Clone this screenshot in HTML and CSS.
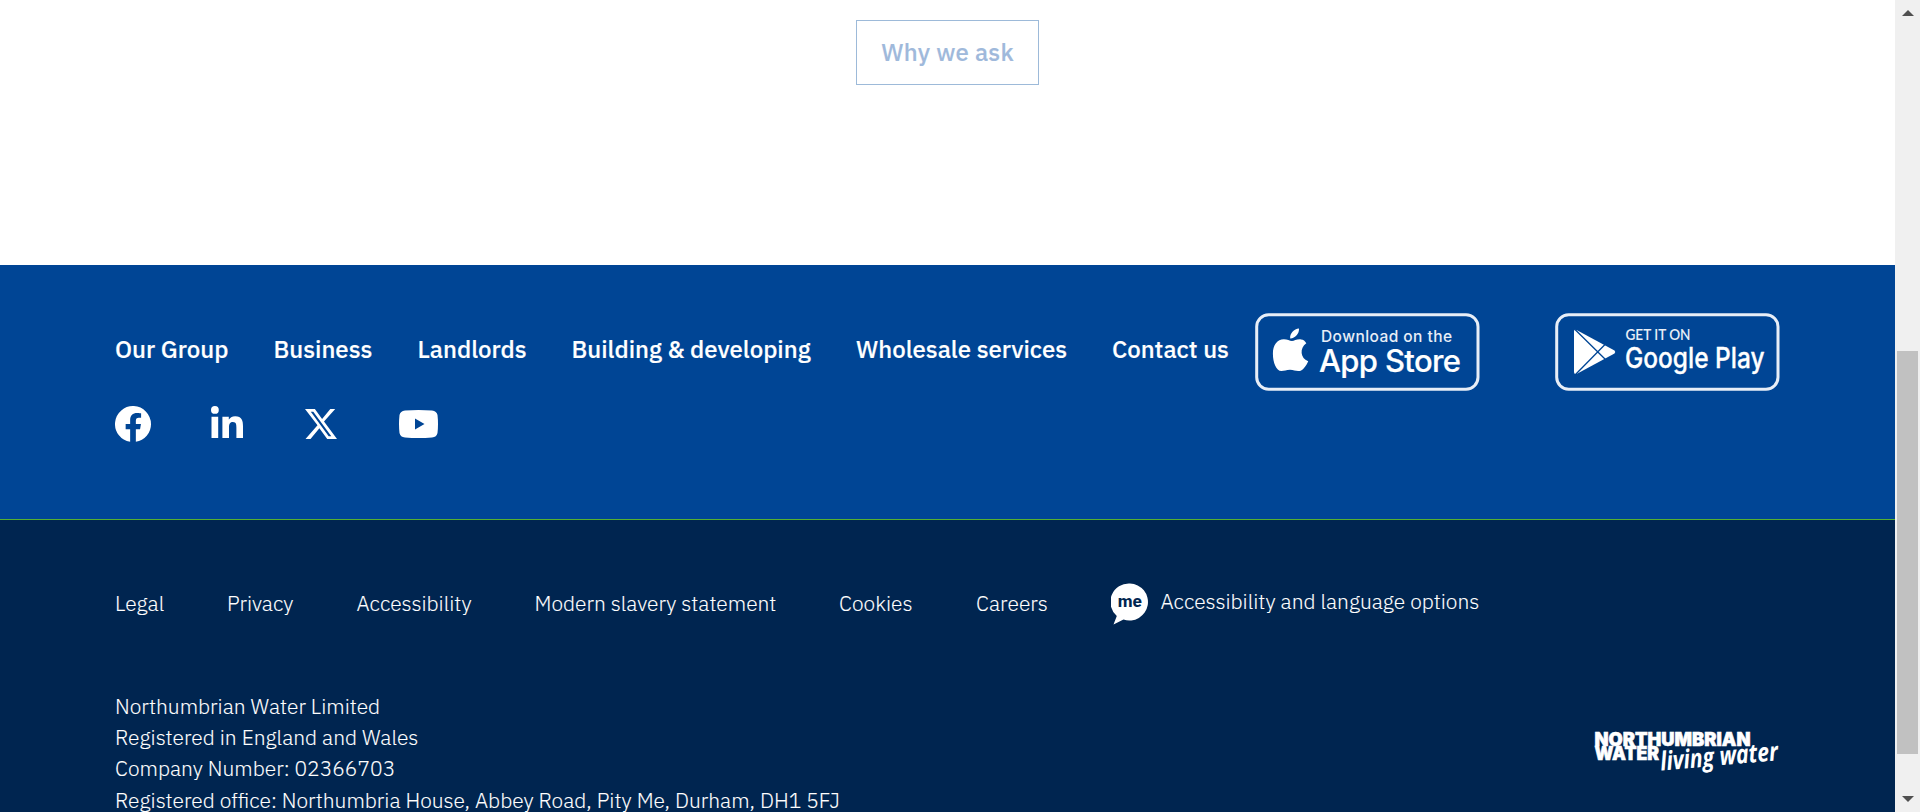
FILE: index.html
```html
<!DOCTYPE html>
<html lang="en">
<head>
<meta charset="utf-8">
<title>Northumbrian Water</title>
<link rel="stylesheet" href="styles.css">
</head>
<body>
<div class="window">
  <div class="page">
    <main class="content">
      <a class="button">Why we ask</a>
    </main>
    <footer>
      <section class="primary">
        <div class="primary-links">
          <nav class="nav">
            <a>Our Group</a><a>Business</a><a>Landlords</a><a>Building &amp; developing</a><a>Wholesale services</a><a>Contact us</a>
          </nav>
          <div class="social">
            <svg class="fb" viewBox="0 0 24 24"><path d="M24 12a12 12 0 1 0-13.9 11.9v-8.4H7.1V12h3V9.4c0-3 1.8-4.7 4.6-4.7 1.3 0 2.7.2 2.7.2v3h-1.5c-1.5 0-2 .9-2 1.900V12h3.400l-.6 3.500h-2.800v8.400A12 12 0 0 0 24 12z"/></svg>
            <svg class="in" viewBox="0 0 32 32"><circle cx="3.900" cy="3.900" r="3.900"/><path d="M.5 10.700h6.700V32H.5zM11.400 10.700h6.400v2.900h.1c.9-1.700 3.100-3.400 6.300-3.400 6.700 0 7.800 4.400 7.800 10.100V32h-6.600V21.700c0-2.500 0-5.600-3.500-5.600-3.400 0-3.900 2.600-3.900 5.400V32h-6.600z"/></svg>
            <svg class="x" viewBox="0 0 32 30"><path fill-rule="evenodd" d="M0 0h9.900l7.200 9.900L25.300 0h4.900L19 12.500 32 30h-9.800l-7.800-10.700L5.500 30H.5l12-13.700zM5.800 2.800l17.900 24.400h2.600L8.300 2.800z"/></svg>
            <svg class="yt" viewBox="0 0 39 28"><path fill-rule="evenodd" d="M6 .5Q19.500-.5 33 .5Q37.700 1 38.500 5Q39.500 14 38.500 23Q37.700 27 33 27.500Q19.500 28.500 6 27.500Q1.300 27 .5 23Q-.5 14 .5 5Q1.300 1 6 .5zM16 8.500v11l9.500-5.500z"/></svg>
          </div>
        </div>
        <div class="stores">
          <svg class="badge" viewBox="0 0 225 78">
            <rect class="frame" x="1.700" y="1.700" width="221.300" height="74.600" rx="12"/>
            <path d="M44 15.500c.4 5-3.800 10-8.800 9.900-.5-4.800 3.800-9.700 8.800-9.900zM51.300 30.200c-7 4.800-6 15.200 1.900 18-2 4.500-5.300 9.800-9.700 9.900-3.200.1-4.600-1.300-8.500-1.300s-5.500 1.300-8.600 1.300c-5.300 0-8.500-9-8.500-17.400-.1-8.700 4.500-14.400 10.900-14.400 3.500 0 5.900 1.700 8.200 1.700 2.200 0 4.700-2 9-1.600 2.500.2 3.900 1.300 5.300 3.800z"/>
            <text class="get" x="66" y="28.500" textLength="131">Download on the</text>
            <text class="store" x="64" y="58.500" textLength="142">App Store</text>
          </svg>
          <svg class="badge" viewBox="0 0 225 78">
            <rect class="frame" x="1.700" y="1.700" width="221.300" height="74.600" rx="12"/>
            <path d="M19 18Q19.300 16 22 17.200L59.500 37.500Q61 39 59.500 40.400L22 60.700Q19 62 19 59z"/>
            <path class="cut" d="M20 16.500L51.500 47.500M20.500 61.500L50 31.500"/>
            <text class="get-google" x="70.500" y="27" textLength="65" lengthAdjust="spacingAndGlyphs">GET IT ON</text>
            <text class="google" x="70" y="54.500" textLength="139.500" lengthAdjust="spacingAndGlyphs">Google Play</text>
          </svg>
        </div>
      </section>
      <section class="secondary">
        <nav class="legal">
          <a>Legal</a><a>Privacy</a><a>Accessibility</a><a>Modern slavery statement</a><a>Cookies</a><a>Careers</a>
          <a class="options">
            <svg class="me" viewBox="0 0 38 42"><path d="M19 .5a18.500 18.500 0 1 1-6.500 36L2.500 41.500 5.800 33A18.500 18.500 0 0 1 19 .5z"/><text x="6.500" y="24" textLength="24.500">me</text></svg>
            <span class="options-label">Accessibility and language options</span>
          </a>
        </nav>
        <div class="company">
          <div class="address">
            <div>Northumbrian Water Limited</div>
            <div>Registered in England and Wales</div>
            <div>Company Number: 02366703</div>
            <div>Registered office: Northumbria House, Abbey Road, Pity Me, Durham, DH1 5FJ</div>
          </div>
          <svg class="logo" viewBox="0 0 186 48">
            <text class="brand" x="0.500" y="15.500" textLength="156" lengthAdjust="spacingAndGlyphs">NORTHUMBRIAN</text>
            <text class="brand" x="0.500" y="30" textLength="64.500" lengthAdjust="spacingAndGlyphs">WATER</text>
            <text class="script" transform="translate(67 40.500) rotate(-5)" x="0" y="0" textLength="118" lengthAdjust="spacingAndGlyphs">living water</text>
          </svg>
        </div>
      </section>
    </footer>
  </div>
  <div class="scrollbar">
    <svg class="arrow" viewBox="0 0 12 6"><path d="M6 0l6 6H0z"/></svg>
    <div class="thumb"></div>
    <svg class="arrow down" viewBox="0 0 12 6"><path d="M0 0h12L6 6z"/></svg>
  </div>
</div>
</body>
</html>
```
FILE: styles.css
```css
* { box-sizing: border-box; }
body { margin: 0; overflow: hidden; background: #fff; font-family: "IBM Plex Sans", "Noto Sans", sans-serif; }
.window { display: flex; width: 1920px; height: 812px; overflow: hidden; }
.page { width: 1895px; height: 812px; overflow: hidden; }
.content { height: 265px; padding-top: 20px; display: flex; justify-content: center; align-items: flex-start; }
.button { width: 183px; height: 65px; padding-bottom: 1px; border: 1px solid #9dbad9; color: #9fb9db; display: flex; align-items: center; justify-content: center; font-size: 24px; font-weight: 500; letter-spacing: .25px; white-space: nowrap; -webkit-text-stroke: .15px; }
a, .address div { white-space: nowrap; }
svg { display: block; fill: #fff; flex: none; }

.primary { height: 255px; background: #004595; border-bottom: 1px solid #56b031; padding: 48px 115px 0; display: flex; }
.primary-links { width: 1140px; flex: none; }
.nav { display: grid; grid-template-columns: 158.500px 144px 154px 284.500px 256px 143px; height: 72px; align-items: center; color: #fff; font-size: 24px; font-weight: 500; line-height: 30px; -webkit-text-stroke: .15px #fff; }
.social { display: grid; grid-template-columns: 96px 94px 94px 40px; height: 47px; margin-top: 15px; align-items: center; }
.fb { width: 36px; height: 36px; }
.in { width: 32px; height: 32px; margin-top: -3px; }
.x { width: 32px; height: 30px; }
.yt { width: 39px; height: 28px; }
.stores { display: flex; gap: 75px; }
.badge { width: 225px; height: 78px; }
.frame { fill: none; stroke: #e8eef7; stroke-width: 3px; }
.cut { fill: none; stroke: #004595; stroke-width: 1.300px; }
.get { font: 500 15.500px Inter, sans-serif; fill: #e8eef7; }
.store { font: 500 31px Inter, sans-serif; stroke: #fff; stroke-width: .2px; }
.get-google { font: 600 15px Lato, sans-serif; fill: #e8eef7; }
.google { font: 500 28px Inter, sans-serif; stroke: #fff; stroke-width: .3px; }

.secondary { height: 292px; background: #002550; padding: 62px 115px 0; color: #fff; font-size: 21px; font-weight: 300; -webkit-text-stroke: .1px; }
.legal { display: grid; grid-template-columns: 112px 129.500px 178px 304.500px 137px 135px auto; grid-template-rows: 42px; height: 42px; align-items: center; line-height: 31px; }
.options { display: flex; align-items: center; gap: 11.500px; height: 42px; }
.me { width: 38px; height: 42px; margin: 1px 0 -1px; }
.me text { font: 700 17px "IBM Plex Sans", "Noto Sans", sans-serif; fill: #002550; }
.options-label { margin-top: -4px; }
.company { display: flex; justify-content: space-between; margin-top: 67px; }
.address { line-height: 31.200px; }
.logo { width: 186px; height: 48px; margin-top: 39px; }
.brand { font: 900 19px Inter, sans-serif; stroke: #fff; stroke-width: .6px; }
.script { font: italic 700 26px "Open Sans", sans-serif; }

.scrollbar { width: 25px; background: #f0f0f0; display: flex; flex-direction: column; padding: 10px 2px 10px; }
.arrow { width: 12px; height: 6px; margin-left: 5px; fill: #505050; }
.thumb { width: 21px; height: 403px; margin-top: 335px; background: #c1c1c1; }
.down { margin-top: auto; }
```
